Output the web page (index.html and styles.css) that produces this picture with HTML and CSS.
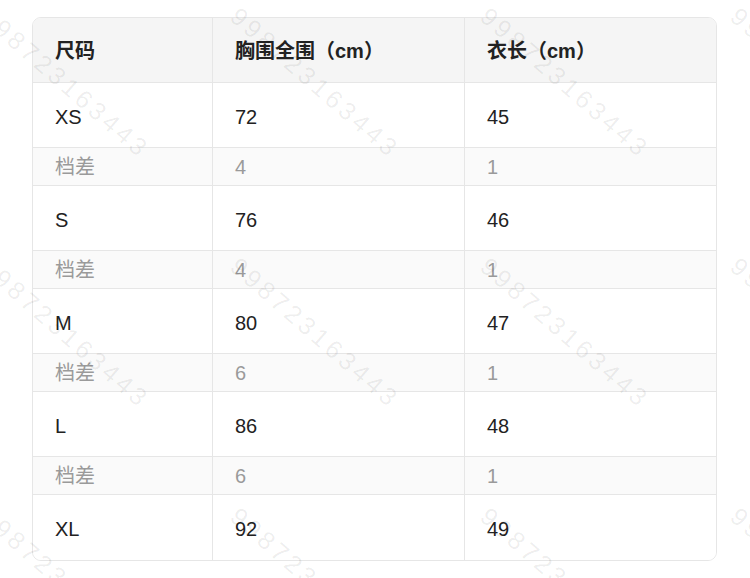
FILE: index.html
```html
<!DOCTYPE html>
<html lang="zh-CN">
<head>
<meta charset="utf-8">
<title>尺码表</title>
<link rel="stylesheet" href="styles.css">
</head>
<body>
<div class="page">
  <div class="size-table">
    <div class="cell head">尺码</div>
    <div class="cell head">胸围全围（cm）</div>
    <div class="cell head last-col">衣长（cm）</div>

    <div class="cell data">XS</div>
    <div class="cell data">72</div>
    <div class="cell data last-col">45</div>
    <div class="cell diff">档差</div>
    <div class="cell diff">4</div>
    <div class="cell diff last-col">1</div>

    <div class="cell data">S</div>
    <div class="cell data">76</div>
    <div class="cell data last-col">46</div>
    <div class="cell diff">档差</div>
    <div class="cell diff">4</div>
    <div class="cell diff last-col">1</div>

    <div class="cell data">M</div>
    <div class="cell data">80</div>
    <div class="cell data last-col">47</div>
    <div class="cell diff">档差</div>
    <div class="cell diff">6</div>
    <div class="cell diff last-col">1</div>

    <div class="cell data">L</div>
    <div class="cell data">86</div>
    <div class="cell data last-col">48</div>
    <div class="cell diff">档差</div>
    <div class="cell diff">6</div>
    <div class="cell diff last-col">1</div>

    <div class="cell data last-row">XL</div>
    <div class="cell data last-row">92</div>
    <div class="cell data last-row last-col">49</div>
  </div>

  <div class="watermark" aria-hidden="true">
    <div class="wm"><span>998723163443</span></div>
    <div class="wm"><span>998723163443</span></div>
    <div class="wm"><span>998723163443</span></div>
    <div class="wm"><span>998723163443</span></div>
    <div class="wm"><span>998723163443</span></div>
    <div class="wm"><span>998723163443</span></div>
    <div class="wm"><span>998723163443</span></div>
    <div class="wm"><span>998723163443</span></div>
    <div class="wm"><span>998723163443</span></div>
    <div class="wm"><span>998723163443</span></div>
    <div class="wm"><span>998723163443</span></div>
    <div class="wm"><span>998723163443</span></div>
  </div>
</div>
</body>
</html>
```
FILE: styles.css
```css
html, body {
  margin: 0;
  padding: 0;
  background: #ffffff;
}

body {
  font-family: "Liberation Sans", "Noto Sans CJK SC", sans-serif;
  color: #222222;
  overflow: hidden;
}

.page {
  position: relative;
  width: 750px;
  height: 578px;
  padding: 17px 33px 0 32px;
  box-sizing: border-box;
  overflow: hidden;
}

.size-table {
  display: grid;
  grid-template-columns: 180px 252px 1fr;
  border: 1px solid #e6e6e6;
  border-radius: 9px;
  overflow: hidden;
  box-sizing: border-box;
  width: 685px;
}

.cell {
  display: flex;
  align-items: center;
  padding-left: 22px;
  box-sizing: border-box;
  border-right: 1px solid #e6e6e6;
  border-bottom: 1px solid #e6e6e6;
  font-size: 20px;
  line-height: 1;
}

.cell.last-col {
  border-right: none;
}

.cell.last-row {
  border-bottom: none;
}

.head {
  height: 65px;
  background: #f5f5f5;
  font-weight: bold;
  color: #222222;
  padding-top: 1px;
}

.data {
  height: 65px;
  background: #ffffff;
  color: #222222;
  padding-top: 3px;
}

.diff {
  height: 38px;
  background: #fafafa;
  color: #9a9a9a;
  padding-top: 1px;
}

.watermark {
  position: absolute;
  left: -20px;
  top: 0;
  display: grid;
  grid-template-columns: repeat(4, 250px);
  grid-auto-rows: 250px;
  pointer-events: none;
  z-index: 2;
}

.wm {
  position: relative;
}

.wm span {
  position: absolute;
  left: 4px;
  top: -2px;
  display: block;
  white-space: nowrap;
  font-family: "Liberation Sans", sans-serif;
  font-size: 25px;
  letter-spacing: 4px;
  color: rgba(0, 0, 0, 0.075);
  transform-origin: 0 50%;
  transform: rotate(41deg);
}
```
